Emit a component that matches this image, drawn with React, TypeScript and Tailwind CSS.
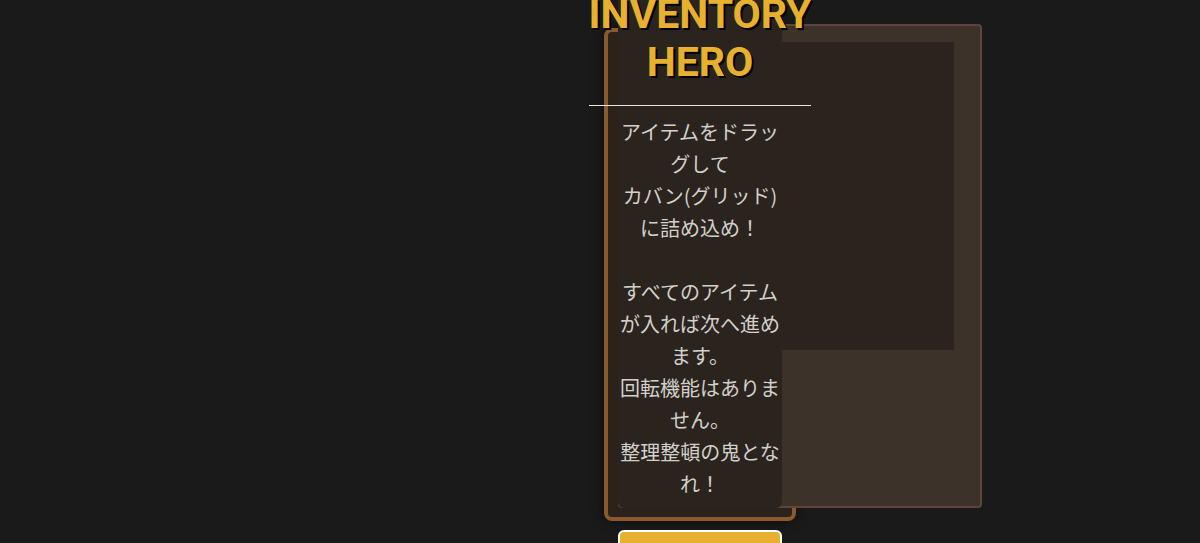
const lines = [
  "アイテムをドラッグして",
  "カバン(グリッド)に詰め込め！",
  "",
  "すべてのアイテムが入れば次へ進めます。",
  "回転機能はありません。",
  "整理整頓の鬼となれ！",
];

function Sidebar() {
  return (
    <div className="flex flex-col w-[192px] mt-[28px]">
      <div className="w-[192px] h-[493px] border-4 border-[#8a5a2e] rounded-lg bg-[#2a221b] px-[10px] pb-[9px] shadow-[0_0_12px_rgba(0,0,0,0.6)]">
        <div className="relative z-[2] -mt-[42px] h-[518px] w-[164px] rounded-b-md bg-[#2b241e] flex flex-col items-center">
          <h1 className="w-max border-b border-[#e6e6e6] pb-[19px] text-center font-['Roboto','Liberation_Sans',sans-serif] text-[41px] leading-[48px] font-bold text-[#e7b12f] [text-shadow:2px_2px_0_#000]">
            INVENTORY
            <br />
            HERO
          </h1>
          <div className="mt-[10px] w-[164px] text-center font-['Noto_Sans_CJK_JP','Noto_Sans',sans-serif] text-[20px] leading-[32px] text-[#d2d0cc]">
            {lines.map((l, i) =>
              l ? <p key={i}>{l}</p> : <p key={i} className="h-[32px]" />
            )}
          </div>
        </div>
      </div>
      <button className="mt-[9px] mx-[14px] w-[164px] rounded-md border-2 border-white bg-[#e7b12f] py-3 font-['Noto_Sans_CJK_JP',sans-serif] text-[18px] font-bold text-[#2b241e]">
        次のステージへ
      </button>
    </div>
  );
}

function BagPanel() {
  // sits under the sidebar column, only its right part shows
  return (
    <div className="relative z-[1] -ml-[178px] mt-[24px] w-[364px] h-[484px] rounded-[4px] border-2 border-[#5e4538] bg-[#3d3229] pt-[16px] pr-[26px] flex justify-end">
      <div className="h-[308px] w-[310px] bg-[#2c231e]" />
    </div>
  );
}

export default function App() {
  return (
    <div className="h-screen overflow-hidden bg-[#1a1a1a]">
      <div className="flex items-start pl-[604px]">
        <Sidebar />
        <BagPanel />
      </div>
    </div>
  );
}
